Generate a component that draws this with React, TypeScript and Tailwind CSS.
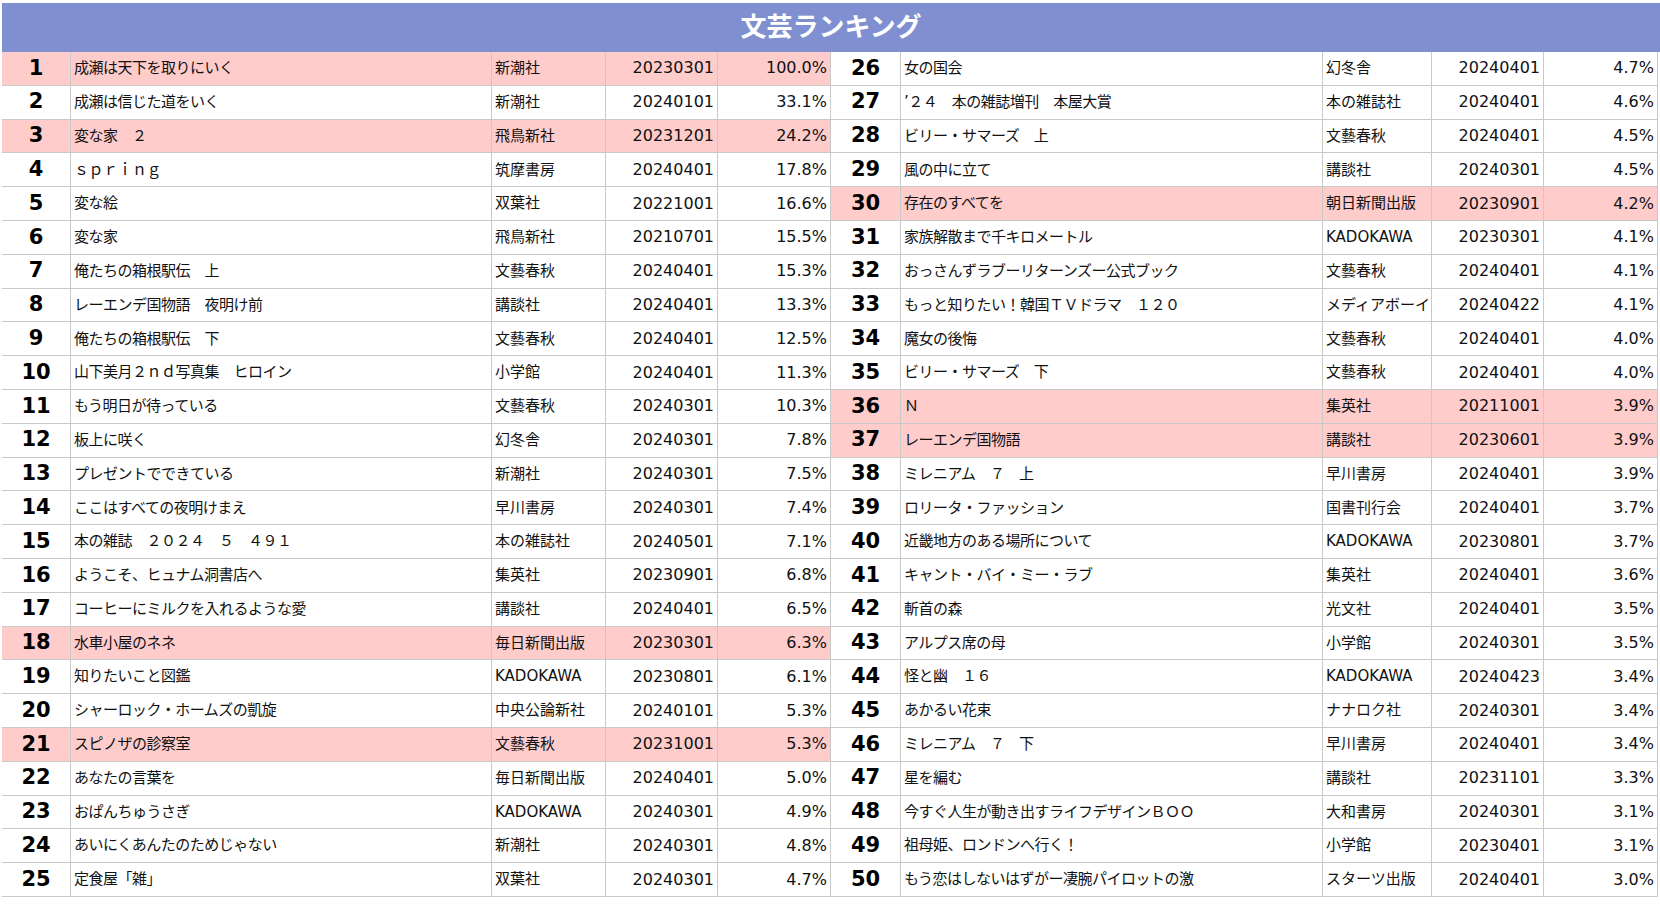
const L: [string, string, string, string, boolean][] = [
  ['成瀬は天下を取りにいく', '新潮社', '20230301', '100.0%', true],
  ['成瀬は信じた道をいく', '新潮社', '20240101', '33.1%', false],
  ['変な家　２', '飛鳥新社', '20231201', '24.2%', true],
  ['ｓｐｒｉｎｇ', '筑摩書房', '20240401', '17.8%', false],
  ['変な絵', '双葉社', '20221001', '16.6%', false],
  ['変な家', '飛鳥新社', '20210701', '15.5%', false],
  ['俺たちの箱根駅伝　上', '文藝春秋', '20240401', '15.3%', false],
  ['レーエンデ国物語　夜明け前', '講談社', '20240401', '13.3%', false],
  ['俺たちの箱根駅伝　下', '文藝春秋', '20240401', '12.5%', false],
  ['山下美月２ｎｄ写真集　ヒロイン', '小学館', '20240401', '11.3%', false],
  ['もう明日が待っている', '文藝春秋', '20240301', '10.3%', false],
  ['板上に咲く', '幻冬舎', '20240301', '7.8%', false],
  ['プレゼントでできている', '新潮社', '20240301', '7.5%', false],
  ['ここはすべての夜明けまえ', '早川書房', '20240301', '7.4%', false],
  ['本の雑誌　２０２４　５　４９１', '本の雑誌社', '20240501', '7.1%', false],
  ['ようこそ、ヒュナム洞書店へ', '集英社', '20230901', '6.8%', false],
  ['コーヒーにミルクを入れるような愛', '講談社', '20240401', '6.5%', false],
  ['水車小屋のネネ', '毎日新聞出版', '20230301', '6.3%', true],
  ['知りたいこと図鑑', 'KADOKAWA', '20230801', '6.1%', false],
  ['シャーロック・ホームズの凱旋', '中央公論新社', '20240101', '5.3%', false],
  ['スピノザの診察室', '文藝春秋', '20231001', '5.3%', true],
  ['あなたの言葉を', '毎日新聞出版', '20240401', '5.0%', false],
  ['おぱんちゅうさぎ', 'KADOKAWA', '20240301', '4.9%', false],
  ['あいにくあんたのためじゃない', '新潮社', '20240301', '4.8%', false],
  ['定食屋「雑」', '双葉社', '20240301', '4.7%', false],
];
const R: [string, string, string, string, boolean][] = [
  ['女の国会', '幻冬舎', '20240401', '4.7%', false],
  ['’２４　本の雑誌増刊　本屋大賞', '本の雑誌社', '20240401', '4.6%', false],
  ['ビリー・サマーズ　上', '文藝春秋', '20240401', '4.5%', false],
  ['風の中に立て', '講談社', '20240301', '4.5%', false],
  ['存在のすべてを', '朝日新聞出版', '20230901', '4.2%', true],
  ['家族解散まで千キロメートル', 'KADOKAWA', '20230301', '4.1%', false],
  ['おっさんずラブーリターンズー公式ブック', '文藝春秋', '20240401', '4.1%', false],
  ['もっと知りたい！韓国ＴＶドラマ　１２０', 'メディアボーイ', '20240422', '4.1%', false],
  ['魔女の後悔', '文藝春秋', '20240401', '4.0%', false],
  ['ビリー・サマーズ　下', '文藝春秋', '20240401', '4.0%', false],
  ['Ｎ', '集英社', '20211001', '3.9%', true],
  ['レーエンデ国物語', '講談社', '20230601', '3.9%', true],
  ['ミレニアム　７　上', '早川書房', '20240401', '3.9%', false],
  ['ロリータ・ファッション', '国書刊行会', '20240401', '3.7%', false],
  ['近畿地方のある場所について', 'KADOKAWA', '20230801', '3.7%', false],
  ['キャント・バイ・ミー・ラブ', '集英社', '20240401', '3.6%', false],
  ['斬首の森', '光文社', '20240401', '3.5%', false],
  ['アルプス席の母', '小学館', '20240301', '3.5%', false],
  ['怪と幽　１６', 'KADOKAWA', '20240423', '3.4%', false],
  ['あかるい花束', 'ナナロク社', '20240301', '3.4%', false],
  ['ミレニアム　７　下', '早川書房', '20240401', '3.4%', false],
  ['星を編む', '講談社', '20231101', '3.3%', false],
  ['今すぐ人生が動き出すライフデザインＢＯＯ', '大和書房', '20240301', '3.1%', false],
  ['祖母姫、ロンドンへ行く！', '小学館', '20230401', '3.1%', false],
  ['もう恋はしないはずがー凄腕パイロットの激', 'スターツ出版', '20240401', '3.0%', false],
];

function Col({ rows, start, cols }: { rows: typeof L; start: number; cols: string }) {
  return (
    <div className="flex flex-col">
      {rows.map((r, i) => (
        <div
          key={i}
          className={`grid ${cols} h-[33.8px] border-b border-[#c9c9c9] ${r[4] ? 'bg-[#ffcccc]' : 'bg-white'}`}
        >
          <div className="flex items-center justify-center border-r border-[#c9c9c9] text-[21px] font-bold text-black">{start + i}</div>
          <div className="flex items-center pl-[3px] border-r border-[#c9c9c9] text-[15px] tracking-[-0.5px] whitespace-nowrap overflow-hidden">{r[0]}</div>
          <div className="flex items-center pl-[3px] border-r border-[#c9c9c9] text-[15px] whitespace-nowrap overflow-hidden">{r[1]}</div>
          <div className="flex items-center justify-end pr-[3px] border-r border-[#c9c9c9] text-[16px]">{r[2]}</div>
          <div className="flex items-center justify-end pr-[3px] border-r border-[#c9c9c9] text-[16px]">{r[3]}</div>
        </div>
      ))}
    </div>
  );
}

export default function App() {
  return (
    <div className="w-[1660px] h-[906px] bg-white pt-[3px] pl-[2px] text-[#111]" style={{ fontFamily: '"DejaVu Sans", "Noto Sans CJK JP", sans-serif' }}>
      <div className="h-[49px] bg-[#7f8fcf] flex items-center justify-center text-white text-[26px] font-bold">文芸ランキング</div>
      <div className="flex">
        <Col rows={L} start={1} cols="grid-cols-[69px_421px_114px_112px_113px]" />
        <Col rows={R} start={26} cols="grid-cols-[70px_422px_109px_112px_114px]" />
      </div>
    </div>
  );
}
